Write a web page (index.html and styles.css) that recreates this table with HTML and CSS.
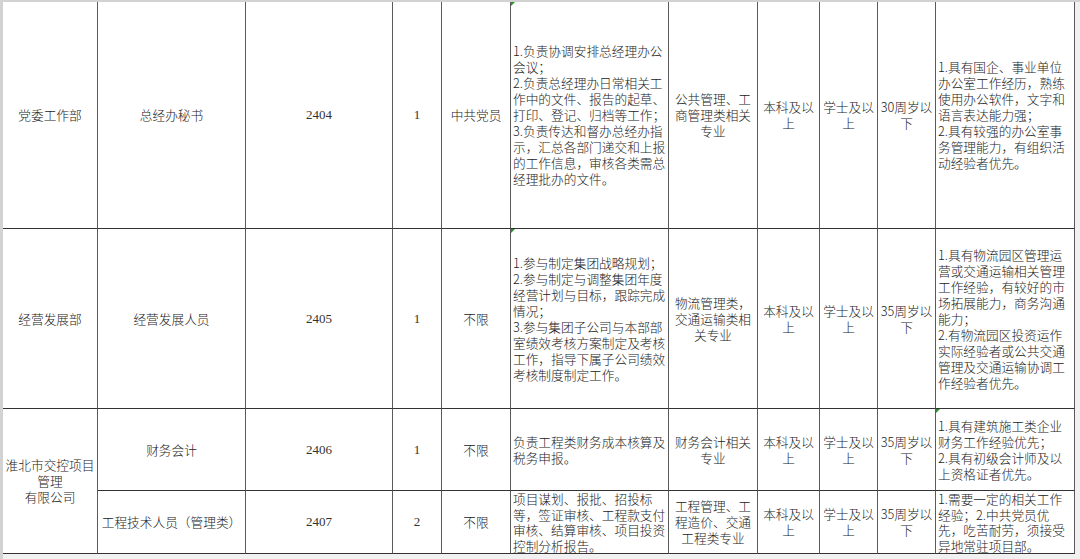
FILE: index.html
```html
<!DOCTYPE html>
<html lang="zh-CN">
<head>
<meta charset="utf-8">
<title>岗位表</title>
<link rel="stylesheet" href="styles.css">
</head>
<body>
<div class="page">
  <div class="sheet">
    <div class="cell c">党委工作部</div>
    <div class="cell c">总经办秘书</div>
    <div class="cell c num">2404</div>
    <div class="cell c num">1</div>
    <div class="cell c">中共党员</div>
    <div class="cell l flag">1.负责协调安排总经理办公<br>会议；<br>2.负责总经理办日常相关工<br>作中的文件、报告的起草、<br>打印、登记、归档等工作；<br>3.负责传达和督办总经办指<br>示，汇总各部门递交和上报<br>的工作信息，审核各类需总<br>经理批办的文件。</div>
    <div class="cell c">公共管理、工<br>商管理类相关<br>专业</div>
    <div class="cell c">本科及以<br>上</div>
    <div class="cell c">学士及以<br>上</div>
    <div class="cell c">30周岁以<br>下</div>
    <div class="cell l">1.具有国企、事业单位<br>办公室工作经历，熟练<br>使用办公软件，文字和<br>语言表达能力强；<br>2.具有较强的办公室事<br>务管理能力，有组织活<br>动经验者优先。</div>

    <div class="cell c">经营发展部</div>
    <div class="cell c">经营发展人员</div>
    <div class="cell c num">2405</div>
    <div class="cell c num">1</div>
    <div class="cell c">不限</div>
    <div class="cell l flag">1.参与制定集团战略规划；<br>2.参与制定与调整集团年度<br>经营计划与目标，跟踪完成<br>情况；<br>3.参与集团子公司与本部部<br>室绩效考核方案制定及考核<br>工作，指导下属子公司绩效<br>考核制度制定工作。</div>
    <div class="cell c">物流管理类，<br>交通运输类相<br>关专业</div>
    <div class="cell c">本科及以<br>上</div>
    <div class="cell c">学士及以<br>上</div>
    <div class="cell c">35周岁以<br>下</div>
    <div class="cell l">1.具有物流园区管理运<br>营或交通运输相关管理<br>工作经验，有较好的市<br>场拓展能力，商务沟通<br>能力；<br>2.有物流园区投资运作<br>实际经验者或公共交通<br>管理及交通运输协调工<br>作经验者优先。</div>

    <div class="cell c span2">淮北市交控项目<br>管理<br>有限公司</div>
    <div class="cell c">财务会计</div>
    <div class="cell c num">2406</div>
    <div class="cell c num">1</div>
    <div class="cell c">不限</div>
    <div class="cell l">负责工程类财务成本核算及<br>税务申报。</div>
    <div class="cell c">财务会计相关<br>专业</div>
    <div class="cell c">本科及以<br>上</div>
    <div class="cell c">学士及以<br>上</div>
    <div class="cell c">35周岁以<br>下</div>
    <div class="cell l flag">1.具有建筑施工类企业<br>财务工作经验优先；<br>2.具有初级会计师及以<br>上资格证者优先。</div>

    <div class="cell c">工程技术人员（管理类）</div>
    <div class="cell c num">2407</div>
    <div class="cell c num">2</div>
    <div class="cell c">不限</div>
    <div class="cell l tight">项目谋划、报批、招投标<br>等，签证审核、工程款支付<br>审核、结算审核、项目投资<br>控制分析报告。</div>
    <div class="cell c">工程管理、工<br>程造价、交通<br>工程类专业</div>
    <div class="cell c">本科及以<br>上</div>
    <div class="cell c">学士及以<br>上</div>
    <div class="cell c">35周岁以<br>下</div>
    <div class="cell l tight">1.需要一定的相关工作<br>经验；2.中共党员优<br>先，吃苦耐劳，须接受<br>异地常驻项目部。</div>
  </div>
</div>
</body>
</html>
```

FILE: styles.css
```css
html, body {
  margin: 0;
  padding: 0;
}

body {
  background: #f1f1f1;
  font-family: "Noto Sans CJK SC", "Noto Sans", sans-serif;
  font-size: 12.7px;
  font-weight: 300;
  color: #222;
}

.page {
  box-sizing: border-box;
  width: 1080px;
  height: 559px;
  border-top: 2px solid #d2d2d2;
  border-left: 3px solid #d2d2d2;
  overflow: hidden;
}

.sheet {
  display: grid;
  grid-template-columns: 95px 148px 147px 49px 69px 158px 89px 62px 58px 58px 139px;
  grid-template-rows: 227px 180px 82px 63px;
  width: 1072px;
}

.cell {
  box-sizing: border-box;
  background: #fff;
  border-right: 1px solid #5a5a5a;
  border-bottom: 1px solid #333;
  display: flex;
  align-items: center;
  line-height: 16px;
  white-space: nowrap;
  position: relative;
}

.c {
  justify-content: center;
  text-align: center;
}

.l {
  justify-content: flex-start;
  text-align: left;
  padding-left: 2px;
}

.tight {
  line-height: 15.5px;
}

.num {
  font-family: "Liberation Serif", "DejaVu Serif", serif;
  font-size: 13px;
  color: #333;
}

.span2 {
  grid-row: span 2;
}

.flag::before {
  content: "";
  position: absolute;
  left: 0;
  top: 0;
  border-top: 4px solid #2f8f2f;
  border-right: 4px solid transparent;
}
```
